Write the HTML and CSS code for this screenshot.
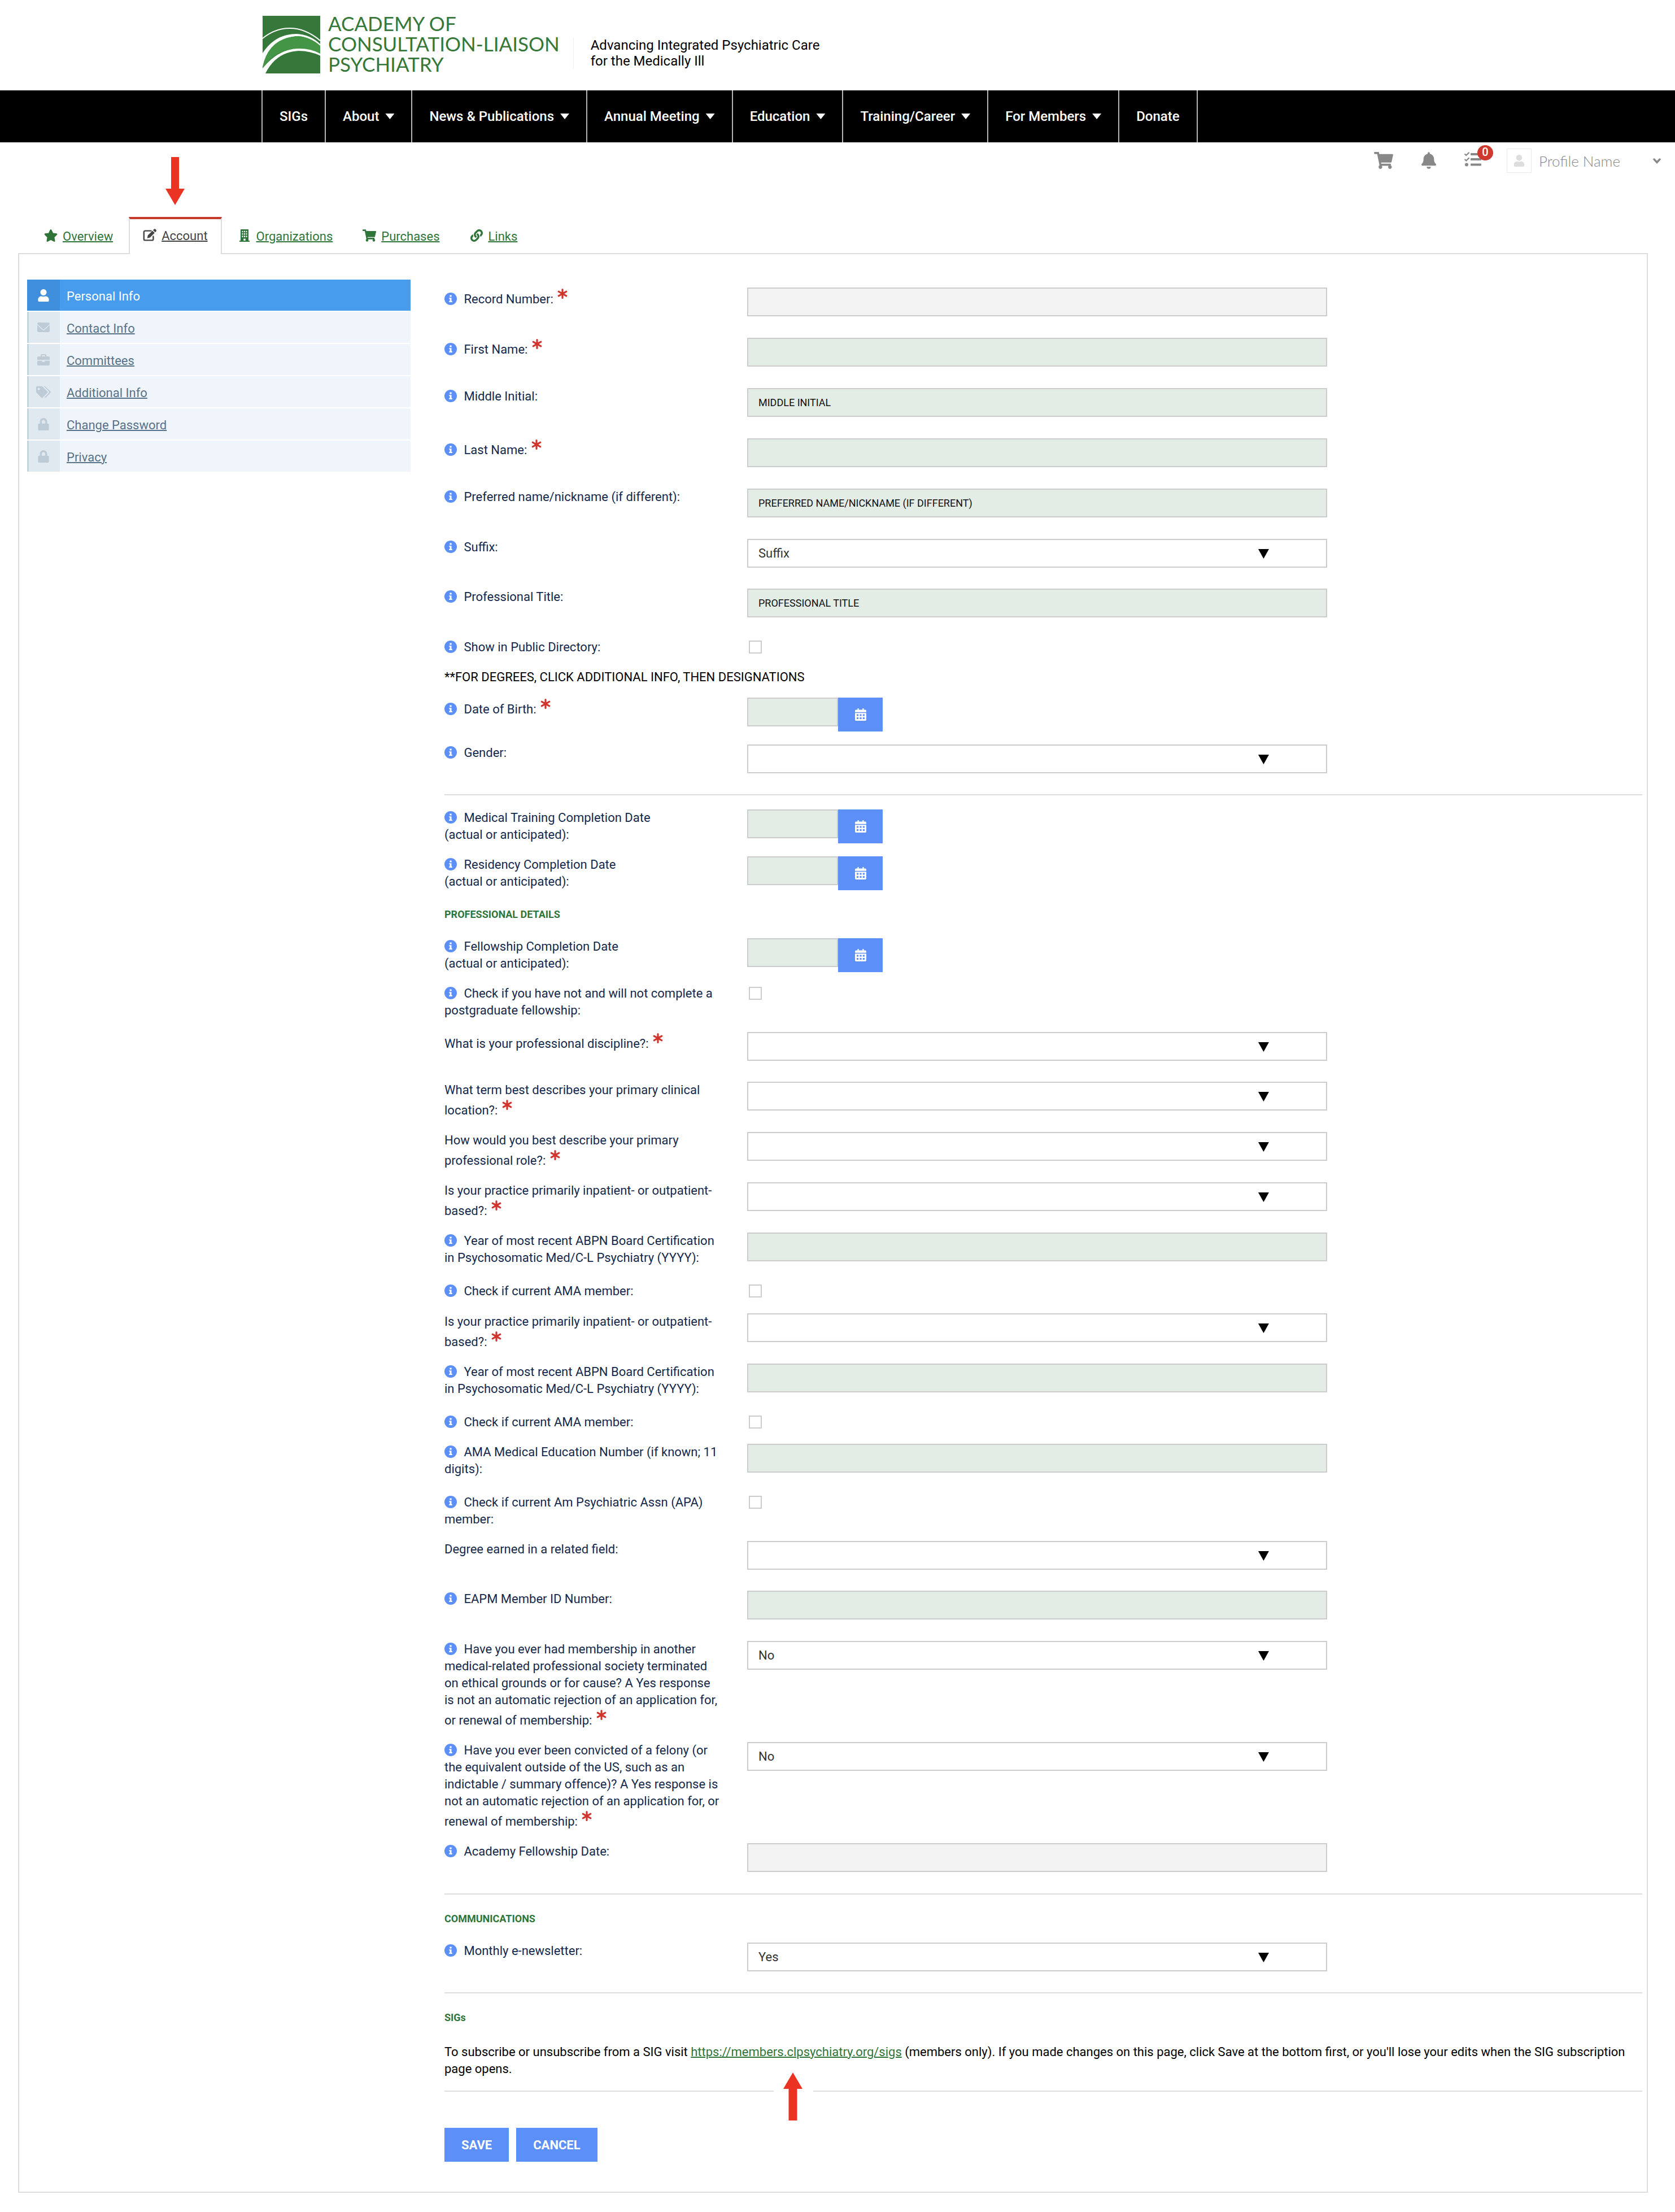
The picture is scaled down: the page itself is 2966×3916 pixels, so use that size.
FILE: index.html
```html
<!DOCTYPE html>
<html lang="en">
  <head>
    <meta charset="UTF-8" />
    <meta name="viewport" content="width=device-width, initial-scale=1.0" />
    <title>Account - Academy of Consultation-Liaison Psychiatry</title>
    <link rel="stylesheet" href="styles.css">
  </head>
  <body>
    <!-- Icon sprite -->
    <svg class="sprite" aria-hidden="true">
      <symbol id="i-info" viewBox="0 0 22 22">
        <circle cx="11" cy="11" r="11" />
        <path fill="#fff" d="M9.4 4.6h3.2v3H9.4zM8.3 9.2h4.2v5.9h1.3v1.9H8.2v-1.9h1.3v-4H8.3z" />
      </symbol>
      <symbol id="i-asterisk" viewBox="0 0 18 18">
        <path d="M9 1.6v14.8M2.200 5.200l13.600 7.600M15.800 5.200L2.200 12.800" fill="none" stroke="currentColor" stroke-width="3.2" stroke-linecap="round" />
      </symbol>
      <symbol id="i-star" viewBox="24 0 528 512">
        <path d="M316.9 18C311.6 7 300.4 0 288.1 0s-23.4 7-28.8 18L195 150.3 51.4 171.5c-12 1.8-22 10.2-25.7 21.7s-.7 24.2 7.9 32.7L137.8 329 113.2 474.7c-2 12 3 24.2 12.9 31.3s23 8 33.8 2.3l128.3-68.5 128.3 68.5c10.8 5.7 23.9 4.9 33.8-2.3s14.9-19.3 12.9-31.3L438.5 329 542.7 225.9c8.6-8.5 11.7-21.2 7.9-32.7s-13.7-19.9-25.7-21.7L381.2 150.3 316.9 18z" />
      </symbol>
      <symbol id="i-edit" viewBox="0 0 24 22">
        <path d="M14.5 3.6H4A2.2 2.2 0 0 0 1.8 5.800V18.200A2.200 2.200 0 0 0 4 20.400H16.200A2.200 2.200 0 0 0 18.400 18.200V13.500" fill="none" stroke="currentColor" stroke-width="2.400" stroke-linecap="round" />
        <path d="M17 3.400l3.900 3.900-8.200 8.200-5 1.200 1.100-5.100zM18 2.400l1.400-1.400c1-1 2.200-1 3.100-.1l.8.8c.9.900.9 2.100 0 3.100L21.900 6.300z" />
      </symbol>
      <symbol id="i-building" viewBox="0 0 18 22">
        <path fill-rule="evenodd" d="M2 0h14v20h2v2H0v-2h2zM4.500 2.700v2.600h2V2.700zm3.500 0v2.600h2V2.700zm3.500 0v2.600h2V2.700zM4.500 7v2.600h2V7zM8 7v2.600h2V7zm3.500 0v2.600h2V7zm-7 4.300v2.600h2v-2.600zm3.500 0v2.600h2v-2.600zm3.500 0v2.600h2v-2.600zM7.300 16.500V20h3.400v-3.500z" />
      </symbol>
      <symbol id="i-cart" viewBox="0 0 576 512">
        <path d="M528.12 301.319l47.273-208C578.806 78.301 567.391 64 551.99 64H159.208l-9.166-44.81C147.758 8.021 137.93 0 126.529 0H24C10.745 0 0 10.745 0 24v16c0 13.255 10.745 24 24 24h69.883l70.248 343.435C147.325 417.1 136 435.222 136 456c0 30.928 25.072 56 56 56s56-25.072 56-56c0-15.674-6.447-29.835-16.824-40h209.647C430.447 426.165 424 440.326 424 456c0 30.928 25.072 56 56 56s56-25.072 56-56c0-22.172-12.888-41.332-31.579-50.405l5.517-24.276c3.413-15.018-8.002-29.319-23.403-29.319H218.117l-6.545-32h293.145c11.206 0 20.92-7.754 23.403-18.681z" />
      </symbol>
      <symbol id="i-link" viewBox="0 0 512 512">
        <path d="M326.612 185.391c59.747 59.809 58.927 155.698.36 214.59-.11.12-.24.25-.36.37l-67.2 67.2c-59.27 59.27-155.699 59.262-214.96 0-59.27-59.26-59.27-155.7 0-214.96l37.106-37.106c9.84-9.84 26.786-3.3 27.294 10.606.648 17.722 3.826 35.527 9.69 52.721 1.986 5.822.567 12.262-3.783 16.612l-13.087 13.087c-28.026 28.026-28.905 73.66-1.155 101.96 28.024 28.579 74.086 28.749 102.325.51l67.2-67.19c28.191-28.191 28.073-73.757 0-101.83-3.701-3.694-7.429-6.564-10.341-8.569a16.037 16.037 0 0 1-6.947-12.606c-.396-10.567 3.348-21.456 11.698-29.806l21.054-21.055c5.521-5.521 14.182-6.199 20.584-1.731a152.482 152.482 0 0 1 20.522 17.197zM467.547 44.449c-59.261-59.262-155.69-59.27-214.96 0l-67.2 67.2c-.12.12-.25.25-.36.37-58.566 58.892-59.387 154.781.36 214.59a152.454 152.454 0 0 0 20.521 17.196c6.402 4.468 15.064 3.789 20.584-1.731l21.054-21.055c8.35-8.35 12.094-19.239 11.698-29.806a16.037 16.037 0 0 0-6.947-12.606c-2.912-2.005-6.64-4.875-10.341-8.569-28.073-28.073-28.191-73.639 0-101.83l67.2-67.19c28.239-28.239 74.3-28.069 102.325.51 27.75 28.3 26.872 73.934-1.155 101.96l-13.087 13.087c-4.35 4.35-5.769 10.79-3.783 16.612 5.864 17.194 9.042 34.999 9.69 52.721.509 13.906 17.454 20.446 27.294 10.606l37.106-37.106c59.271-59.259 59.271-155.699.001-214.959z" />
      </symbol>
      <symbol id="i-bell" viewBox="0 0 448 512">
        <path d="M224 512c35.32 0 63.97-28.65 63.97-64H160.03c0 35.35 28.65 64 63.97 64zm215.39-149.71c-19.32-20.76-55.47-51.99-55.47-154.29 0-77.7-54.48-139.9-127.94-155.16V32c0-17.67-14.32-32-31.98-32s-31.98 14.33-31.98 32v20.84C118.56 68.1 64.08 130.3 64.08 208c0 102.3-36.15 133.53-55.47 154.29-6 6.45-8.66 14.16-8.61 21.71.11 16.4 12.98 32 32.1 32h383.8c19.12 0 32-15.6 32.1-32 .05-7.55-2.61-15.27-8.61-21.71z" />
      </symbol>
      <symbol id="i-tasks" viewBox="0 0 30 26">
        <path d="M1.200 4l2 2L8 1.400M1.200 13.500l2 2L8 10.900" fill="none" stroke="currentColor" stroke-width="2.200" stroke-linecap="round" />
        <circle cx="4" cy="22.500" r="3" />
        <rect x="11" y="2" width="19" height="4" rx="1" />
        <rect x="11" y="11" width="19" height="4" rx="1" />
        <rect x="11" y="20.500" width="19" height="4" rx="1" />
      </symbol>
      <symbol id="i-user" viewBox="0 0 448 512">
        <path d="M224 256c70.7 0 128-57.3 128-128S294.7 0 224 0 96 57.3 96 128s57.3 128 128 128zm89.6 32h-16.7c-22.2 10.2-46.9 16-72.9 16s-50.6-5.8-72.9-16h-16.7C60.2 288 0 348.2 0 422.4V464c0 26.5 21.5 48 48 48h352c26.5 0 48-21.5 48-48v-41.6c0-74.2-60.2-134.4-134.4-134.4z" />
      </symbol>
      <symbol id="i-envelope" viewBox="0 0 22 22">
        <path d="M2 2h18a2 2 0 0 1 2 2v.8L12.500 13.600a2.200 2.200 0 0 1-3 0L0 4.800V4a2 2 0 0 1 2-2zM0 6.600l8.500 8a3.700 3.700 0 0 0 5 0l8.500-8V17a2 2 0 0 1-2 2H2a2 2 0 0 1-2-2z" />
      </symbol>
      <symbol id="i-briefcase" viewBox="0 0 22 22">
        <path fill-rule="evenodd" d="M6 5V3a2 2 0 0 1 2-2h6a2 2 0 0 1 2 2v2h4a2 2 0 0 1 2 2v4H0V7a2 2 0 0 1 2-2zm2.200 0h5.600V3H8.200zM0 12.500h8.500v2.200h5v-2.200H22V19a2 2 0 0 1-2 2H2a2 2 0 0 1-2-2z" />
      </symbol>
      <symbol id="i-tags" viewBox="0 0 28 22">
        <path fill-rule="evenodd" d="M0 2a2 2 0 0 1 2-2h8.600a2 2 0 0 1 1.500.6l9 9a2 2 0 0 1 0 2.900l-8.600 8.900a2 2 0 0 1-2.900 0L.6 12.200A2 2 0 0 1 0 10.700zm5 1a2.200 2.200 0 1 0 .01 0z" />
        <path d="M14.500 0h1.300a2 2 0 0 1 1.500.6l9.800 9a2 2 0 0 1 0 2.900l-8.600 8.900c-.8.800-2 .8-2.800.100l8.200-8.700a3 3 0 0 0 0-3.800z" />
      </symbol>
      <symbol id="i-lock" viewBox="0 0 448 512">
        <path d="M400 224h-24v-72C376 68.2 307.800 0 224 0S72 68.200 72 152v72H48c-26.500 0-48 21.500-48 48v192c0 26.500 21.500 48 48 48h352c26.500 0 48-21.500 48-48V272c0-26.500-21.500-48-48-48zm-104 0H152v-72c0-39.700 32.300-72 72-72s72 32.300 72 72v72z" />
      </symbol>
      <symbol id="i-calendar" viewBox="0 0 20 22">
        <path fill-rule="evenodd" d="M4.500 0h2.200v2.600h6.600V0h2.200v2.600H18a2 2 0 0 1 2 2v2.200H0V4.600a2 2 0 0 1 2-2h2.500zM0 8.200h20V20a2 2 0 0 1-2 2H2a2 2 0 0 1-2-2zm3 2.400v2.900h3.200v-2.900zm5.400 0v2.900h3.200v-2.900zm5.400 0v2.900H17v-2.900zM3 16v2.900h3.200V16zm5.400 0v2.900h3.200V16zm5.400 0v2.900H17V16z" />
      </symbol>
    </svg>

    <!-- Header -->
    <header>
      <div class="container masthead">
        <a class="logo" href="#">
          <svg class="logo-mark" viewBox="0 0 102 102" aria-hidden="true">
            <rect width="102" height="102" fill="#35783a" />
            <path d="M0 40Q22 22 48 22Q76 22 102 44" fill="none" stroke="#fff" stroke-width="2" />
            <path d="M0 66Q22 32 60 32Q84 33 102 50V53Q82 36 60 36Q10 42 0 91z" fill="#fff" />
            <path d="M0 91Q10 40 60 36Q82 36 102 53V68Q35 42 0 93z" fill="#449546" />
            <path d="M0 93Q28 58 65 58Q86 58 102 67V70.500Q84 62 64 62Q24 64 5 102H0z" fill="#fff" />
          </svg>
          <span class="logo-text">ACADEMY OF<br>CONSULTATION-LIAISON<br>PSYCHIATRY</span>
        </a>
        <p class="tagline">Advancing Integrated Psychiatric Care<br>for the Medically Ill</p>
      </div>
      <nav class="main-nav">
        <ul class="container">
          <li><a href="#">SIGs</a></li>
          <li><a class="has-menu" href="#">About</a></li>
          <li><a class="has-menu" href="#">News &amp; Publications</a></li>
          <li><a class="has-menu" href="#">Annual Meeting</a></li>
          <li><a class="has-menu" href="#">Education</a></li>
          <li><a class="has-menu" href="#">Training/Career</a></li>
          <li><a class="has-menu" href="#">For Members</a></li>
          <li><a href="#">Donate</a></li>
        </ul>
      </nav>
    </header>

    <!-- User bar -->
    <div class="user-bar">
      <a class="icon-cart" href="#" aria-label="Cart"><svg><use href="#i-cart" /></svg></a>
      <a class="icon-bell" href="#" aria-label="Notifications"><svg><use href="#i-bell" /></svg></a>
      <a class="icon-tasks" href="#" aria-label="Tasks"><svg><use href="#i-tasks" /></svg><span class="badge">0</span></a>
      <button class="profile" type="button">
        <span class="avatar"><svg><use href="#i-user" /></svg></span>
        <span class="profile-name">Profile Name</span>
        <svg class="chevron" viewBox="0 0 14 10" aria-hidden="true"><path d="M2 2l5 5.500L12 2" fill="none" stroke="currentColor" stroke-width="3.400" stroke-linecap="round" /></svg>
      </button>
    </div>

    <main>
      <!-- Tabs -->
      <nav class="tabs">
        <a class="tab" href="#"><svg><use href="#i-star" /></svg><span>Overview</span></a>
        <a class="tab active" href="#" aria-current="page">
          <svg><use href="#i-edit" /></svg><span>Account</span>
          <svg class="arrow arrow-down" viewBox="0 0 34 85" aria-hidden="true"><path d="M10 0h14v56h10L17 85 0 56h10z" /></svg>
        </a>
        <a class="tab" href="#"><svg><use href="#i-building" /></svg><span>Organizations</span></a>
        <a class="tab" href="#"><svg><use href="#i-cart" /></svg><span>Purchases</span></a>
        <a class="tab" href="#"><svg><use href="#i-link" /></svg><span>Links</span></a>
      </nav>

      <div class="panel">
        <!-- Side menu -->
        <nav class="side-menu">
          <a class="active" href="#"><span class="side-icon"><svg><use href="#i-user" /></svg></span><span class="side-text">Personal Info</span></a>
          <a href="#"><span class="side-icon"><svg><use href="#i-envelope" /></svg></span><span class="side-text">Contact Info</span></a>
          <a href="#"><span class="side-icon"><svg><use href="#i-briefcase" /></svg></span><span class="side-text">Committees</span></a>
          <a href="#"><span class="side-icon"><svg><use href="#i-tags" /></svg></span><span class="side-text">Additional Info</span></a>
          <a href="#"><span class="side-icon"><svg><use href="#i-lock" /></svg></span><span class="side-text">Change Password</span></a>
          <a href="#"><span class="side-icon"><svg><use href="#i-lock" /></svg></span><span class="side-text">Privacy</span></a>
        </nav>

        <form class="profile-form">
          <div class="row">
            <label for="record"><svg class="info"><use href="#i-info" /></svg> Record Number: <svg class="req"><use href="#i-asterisk" /></svg></label>
            <div class="field"><input class="text" type="text" id="record" disabled></div>
          </div>
          <div class="row">
            <label for="first"><svg class="info"><use href="#i-info" /></svg> First Name: <svg class="req"><use href="#i-asterisk" /></svg></label>
            <div class="field"><input class="text" type="text" id="first" required></div>
          </div>
          <div class="row">
            <label for="middle"><svg class="info"><use href="#i-info" /></svg> Middle Initial:</label>
            <div class="field"><input class="text" type="text" id="middle" placeholder="MIDDLE INITIAL"></div>
          </div>
          <div class="row">
            <label for="last"><svg class="info"><use href="#i-info" /></svg> Last Name: <svg class="req"><use href="#i-asterisk" /></svg></label>
            <div class="field"><input class="text" type="text" id="last" required></div>
          </div>
          <div class="row">
            <label for="nickname"><svg class="info"><use href="#i-info" /></svg> Preferred name/nickname (if different):</label>
            <div class="field"><input class="text" type="text" id="nickname" placeholder="PREFERRED NAME/NICKNAME (IF DIFFERENT)"></div>
          </div>
          <div class="row">
            <label for="suffix"><svg class="info"><use href="#i-info" /></svg> Suffix:</label>
            <div class="field select"><select id="suffix"><option>Suffix</option></select></div>
          </div>
          <div class="row">
            <label for="title"><svg class="info"><use href="#i-info" /></svg> Professional Title:</label>
            <div class="field"><input class="text" type="text" id="title" placeholder="PROFESSIONAL TITLE"></div>
          </div>
          <div class="row">
            <label for="directory"><svg class="info"><use href="#i-info" /></svg> Show in Public Directory:</label>
            <div class="check"><input type="checkbox" id="directory"></div>
          </div>
          <p class="note">**FOR DEGREES, CLICK ADDITIONAL INFO, THEN DESIGNATIONS</p>
          <div class="row">
            <label for="dob"><svg class="info"><use href="#i-info" /></svg> Date of Birth: <svg class="req"><use href="#i-asterisk" /></svg></label>
            <div class="date"><input class="text" type="text" id="dob" required><button type="button" aria-label="Choose date"><svg><use href="#i-calendar" /></svg></button></div>
          </div>
          <div class="row">
            <label for="gender"><svg class="info"><use href="#i-info" /></svg> Gender:</label>
            <div class="field select"><select id="gender"><option></option></select></div>
          </div>

          <hr>

          <div class="row">
            <label for="training"><svg class="info"><use href="#i-info" /></svg> Medical Training Completion Date<br>(actual or anticipated):</label>
            <div class="date"><input class="text" type="text" id="training"><button type="button" aria-label="Choose date"><svg><use href="#i-calendar" /></svg></button></div>
          </div>
          <div class="row">
            <label for="residency"><svg class="info"><use href="#i-info" /></svg> Residency Completion Date<br>(actual or anticipated):</label>
            <div class="date"><input class="text" type="text" id="residency"><button type="button" aria-label="Choose date"><svg><use href="#i-calendar" /></svg></button></div>
          </div>

          <h2>PROFESSIONAL DETAILS</h2>
          <div class="row">
            <label for="fellowship"><svg class="info"><use href="#i-info" /></svg> Fellowship Completion Date<br>(actual or anticipated):</label>
            <div class="date"><input class="text" type="text" id="fellowship"><button type="button" aria-label="Choose date"><svg><use href="#i-calendar" /></svg></button></div>
          </div>
          <div class="row">
            <label for="no-fellowship"><svg class="info"><use href="#i-info" /></svg> Check if you have not and will not complete a postgraduate fellowship:</label>
            <div class="check"><input type="checkbox" id="no-fellowship"></div>
          </div>
          <div class="row">
            <label for="discipline">What is your professional discipline?: <svg class="req"><use href="#i-asterisk" /></svg></label>
            <div class="field select"><select id="discipline" required><option></option></select></div>
          </div>
          <div class="row">
            <label for="location">What term best describes your primary clinical location?: <svg class="req"><use href="#i-asterisk" /></svg></label>
            <div class="field select"><select id="location" required><option></option></select></div>
          </div>
          <div class="row">
            <label for="role">How would you best describe your primary professional role?: <svg class="req"><use href="#i-asterisk" /></svg></label>
            <div class="field select"><select id="role" required><option></option></select></div>
          </div>
          <div class="row">
            <label for="practice">Is your practice primarily inpatient- or outpatient-based?: <svg class="req"><use href="#i-asterisk" /></svg></label>
            <div class="field select"><select id="practice" required><option></option></select></div>
          </div>
          <div class="row">
            <label for="abpn"><svg class="info"><use href="#i-info" /></svg> Year of most recent ABPN Board Certification in Psychosomatic Med/C-L Psychiatry (YYYY):</label>
            <div class="field"><input class="text" type="text" id="abpn"></div>
          </div>
          <div class="row">
            <label for="ama"><svg class="info"><use href="#i-info" /></svg> Check if current AMA member:</label>
            <div class="check"><input type="checkbox" id="ama"></div>
          </div>

          <div class="group">
            <div class="row">
              <label for="practice2">Is your practice primarily inpatient- or outpatient-based?: <svg class="req"><use href="#i-asterisk" /></svg></label>
              <div class="field select"><select id="practice2" required><option></option></select></div>
            </div>
            <div class="row">
              <label for="abpn2"><svg class="info"><use href="#i-info" /></svg> Year of most recent ABPN Board Certification in Psychosomatic Med/C-L Psychiatry (YYYY):</label>
              <div class="field"><input class="text" type="text" id="abpn2"></div>
            </div>
            <div class="row">
              <label for="ama2"><svg class="info"><use href="#i-info" /></svg> Check if current AMA member:</label>
              <div class="check"><input type="checkbox" id="ama2"></div>
            </div>
            <div class="row">
              <label for="ama-number"><svg class="info"><use href="#i-info" /></svg> AMA Medical Education Number (if known; 11 digits):</label>
              <div class="field"><input class="text" type="text" id="ama-number"></div>
            </div>
            <div class="row">
              <label for="apa"><svg class="info"><use href="#i-info" /></svg> Check if current Am Psychiatric Assn (APA) member:</label>
              <div class="check"><input type="checkbox" id="apa"></div>
            </div>
            <div class="row">
              <label for="degree">Degree earned in a related field:</label>
              <div class="field select"><select id="degree"><option></option></select></div>
            </div>
            <div class="row">
              <label for="eapm"><svg class="info"><use href="#i-info" /></svg> EAPM Member ID Number:</label>
              <div class="field"><input class="text" type="text" id="eapm"></div>
            </div>
            <div class="row">
              <label for="terminated"><svg class="info"><use href="#i-info" /></svg> Have you ever had membership in another medical-related professional society terminated on ethical grounds or for cause? A Yes response is not an automatic rejection of an application for, or renewal of membership: <svg class="req"><use href="#i-asterisk" /></svg></label>
              <div class="field select"><select id="terminated" required><option>No</option></select></div>
            </div>
            <div class="row">
              <label for="felony"><svg class="info"><use href="#i-info" /></svg> Have you ever been convicted of a felony (or the equivalent outside of the US, such as an indictable / summary offence)? A Yes response is not an automatic rejection of an application for, or renewal of membership: <svg class="req"><use href="#i-asterisk" /></svg></label>
              <div class="field select"><select id="felony" required><option>No</option></select></div>
            </div>
            <div class="row">
              <label for="academy-date"><svg class="info"><use href="#i-info" /></svg> Academy Fellowship Date:</label>
              <div class="field"><input class="text" type="text" id="academy-date" disabled></div>
            </div>
          </div>

          <hr>

          <h2>COMMUNICATIONS</h2>
          <div class="row">
            <label for="newsletter"><svg class="info"><use href="#i-info" /></svg> Monthly e-newsletter:</label>
            <div class="field select"><select id="newsletter"><option>Yes</option></select></div>
          </div>

          <hr>

          <h2>SIGs</h2>
          <div class="sigs">
            <p>To subscribe or unsubscribe from a SIG visit <a href="https://members.clpsychiatry.org/sigs">https://members.clpsychiatry.org/sigs</a> (members only). If you made changes on this page, click Save at the bottom first, or you'll lose your edits when the SIG subscription page opens.</p>
            <svg class="arrow arrow-up" viewBox="0 0 70 85" aria-hidden="true"><rect width="70" height="85" fill="#fff" /><path d="M34 0l17 29h-9.500v56h-15V29H17z" /></svg>
          </div>

          <hr>

          <div class="actions">
            <button type="submit">SAVE</button>
            <button type="button">CANCEL</button>
          </div>
        </form>
      </div>
    </main>
  </body>
</html>
```

FILE: styles.css
```css
* {
  box-sizing: border-box;
}

body {
  margin: 0;
  font-family: Roboto, sans-serif;
  font-size: 22px;
  line-height: 30px;
  color: #000;
  background: #fff;
}

svg {
  fill: currentColor;
}

.sprite {
  display: none;
}

.container {
  max-width: 2040px;
  margin: 0 auto;
}

/* Header */
.masthead {
  display: flex;
  align-items: flex-end;
  gap: 24px;
  padding: 28px 2px 30px;
}

.logo {
  display: flex;
  gap: 14px;
  color: #35783a;
  text-decoration: none;
}

.logo-mark {
  width: 102px;
  height: 102px;
}

.logo-text {
  font-family: Lato, sans-serif;
  font-size: 35px;
  line-height: 36px;
  margin: -5px 0 -1px;
}

.tagline {
  margin: 0 0 8px;
  padding-left: 30px;
  border-left: 1px solid #eee;
  font-size: 24px;
  line-height: 28px;
}

.main-nav {
  background: #000;
}

.main-nav ul {
  display: flex;
  padding: 0;
  list-style: none;
}

.main-nav li {
  border-left: 2px solid #b5b5b5;
}

.main-nav li:last-child {
  border-right: 2px solid #b5b5b5;
}

.main-nav a {
  display: flex;
  align-items: center;
  gap: 11px;
  height: 92px;
  padding: 0 30px;
  font-size: 24px;
  font-weight: 500;
  color: #fff;
  text-decoration: none;
}

.main-nav .has-menu::after {
  content: "";
  width: 16px;
  height: 10px;
  background: #fff;
  clip-path: polygon(0 0, 100% 0, 50% 100%);
}

/* User bar */
.user-bar {
  display: flex;
  justify-content: flex-end;
  gap: 50px;
  padding: 11px 25px 0 0;
  color: #888;
}

.user-bar a {
  position: relative;
  margin-top: 6px;
  color: #888;
}

.user-bar svg {
  display: block;
}

.icon-cart svg {
  width: 34px;
  height: 30px;
}

.icon-bell svg {
  width: 26px;
  height: 30px;
}

.icon-tasks svg {
  width: 30px;
  height: 26px;
}

.badge {
  position: absolute;
  top: -12px;
  left: 23px;
  width: 28px;
  height: 27px;
  border-radius: 50%;
  background: #cf392f;
  color: #fff;
  font-size: 20px;
  font-weight: 500;
  line-height: 25px;
  text-align: center;
}

.profile {
  display: flex;
  align-items: center;
  padding: 0;
  border: none;
  background: none;
  color: #888;
  font-family: inherit;
  cursor: pointer;
}

.avatar {
  display: grid;
  place-items: center;
  width: 44px;
  height: 43px;
  margin-left: -5px;
  border: 1px solid #e8e8e8;
  color: #ddd;
}

.avatar svg {
  width: 20px;
  height: 21px;
}

.profile-name {
  margin: 0 58px 0 13px;
  font-family: Lato, sans-serif;
  font-size: 26px;
  font-weight: 300;
}

.chevron {
  width: 14px;
  height: 10px;
}

/* Tabs */
main {
  margin: 78px 48px 34px 32px;
}

.tabs {
  display: flex;
  gap: 3px;
  padding-left: 21px;
}

.tab {
  position: relative;
  display: flex;
  gap: 9px;
  height: 64px;
  padding: 20px 25px 0;
  color: #2f7539;
  text-decoration: none;
}

.tab > svg:first-child {
  width: 24px;
  height: 22px;
  margin-top: 2px;
}

.tab span {
  text-decoration: underline;
  text-decoration-thickness: 2px;
}

.tab.active {
  height: 66px;
  margin-bottom: -2px;
  padding: 15px 23px 0;
  border: 2px solid #ddd;
  border-top: 4px solid #c63a2b;
  border-bottom: none;
  background: #fff;
  color: #444;
}

.arrow {
  position: absolute;
  fill: #eb3323;
}

.arrow-down {
  left: calc(50% - 17px);
  bottom: calc(100% + 25px);
  width: 34px;
  height: 85px;
}

.arrow-up {
  left: 583px;
  top: 51px;
  width: 70px;
  height: 85px;
}

/* Panel */
.panel {
  display: flex;
  align-items: flex-start;
  gap: 60px;
  padding: 45px 8px 53px 14px;
  border: 2px solid #ddd;
}

.side-menu {
  display: flex;
  flex-direction: column;
  gap: 2px;
  flex: 0 1 679px;
}

.side-menu a {
  display: flex;
  align-items: center;
  gap: 12px;
  height: 55px;
  background: #eff5fa;
  color: #587288;
  text-decoration-thickness: 2px;
}

.side-icon {
  display: grid;
  place-items: center;
  width: 58px;
  height: 55px;
  padding-right: 3px;
  border-left: 3px solid #c5d3dd;
  background: #e1e9f0;
  color: #bccbd6;
}

.side-icon svg {
  width: 26px;
  height: 22px;
}

.side-text {
  padding-top: 5px;
}

.side-menu .active {
  background: #489ced;
  color: #fff;
  text-decoration: none;
}

.side-menu .active .side-icon {
  border-color: #3f8fdd;
  background: #3f8fdd;
  color: #fff;
}

/* Form */
.profile-form {
  flex: 1;
  padding-top: 14px;
}

.row {
  display: grid;
  grid-template-columns: 488px 1fr;
  gap: 48px;
  margin-bottom: 23px;
}

.row label {
  color: #14294d;
}

.info {
  width: 22px;
  height: 22px;
  margin-right: 7px;
  vertical-align: -3px;
  color: #5c8ff7;
}

.req {
  width: 18px;
  height: 18px;
  margin: 2px 0 0 2px;
  vertical-align: 8px;
  color: #d0342c;
}

.field {
  min-height: 66px;
  max-width: 1027px;
}

.field.select {
  position: relative;
  min-height: 65px;
}

.field.select::after {
  content: "";
  position: absolute;
  top: 18px;
  right: 103px;
  width: 19px;
  height: 17px;
  background: #000;
  clip-path: polygon(0 0, 100% 0, 50% 100%);
  pointer-events: none;
}

.text,
select {
  display: block;
  width: 100%;
  height: 51px;
  padding: 0 18px;
  border: 2px solid #ccc;
  border-radius: 0;
  font-family: inherit;
  font-size: 18px;
}

.text {
  background: #e3ece5;
}

.text:disabled {
  background: #f3f3f3;
}

.text::placeholder {
  color: #111;
}

select {
  appearance: none;
  background: #fff;
  color: #333;
  font-size: 22px;
}

.check input {
  display: block;
  appearance: none;
  width: 23px;
  height: 23px;
  margin: 3px;
  border: 2px solid #ccc;
  background: #fff;
}

.date {
  display: flex;
  align-items: flex-start;
}

.date .text {
  width: 161px;
}

.date button {
  display: grid;
  place-items: center;
  width: 79px;
  height: 60px;
  padding: 0;
  border: none;
  background: #5c8ff7;
  color: #fff;
  cursor: pointer;
}

.date svg {
  width: 20px;
  height: 22px;
}

.note {
  margin: 0 0 21px;
}

h2 {
  margin: 31px 0 30px;
  font-size: 18px;
  line-height: 24px;
  font-weight: 700;
  color: #2f7539;
}

hr {
  height: 2px;
  margin: 23px 0 25px;
  border: none;
  background: #ddd;
}

.group {
  margin-top: 24px;
}

.sigs {
  position: relative;
  margin: 34px 0 22px;
}

.sigs p {
  margin: 0;
}

.sigs a {
  color: #2f7539;
  text-decoration-thickness: 2px;
}

.actions {
  display: flex;
  gap: 13px;
  margin-top: 64px;
}

.actions button {
  height: 60px;
  padding: 0 30px;
  border: none;
  background: #5c8ff7;
  color: #fff;
  font-family: inherit;
  font-size: 22px;
  font-weight: 700;
  cursor: pointer;
}
```
